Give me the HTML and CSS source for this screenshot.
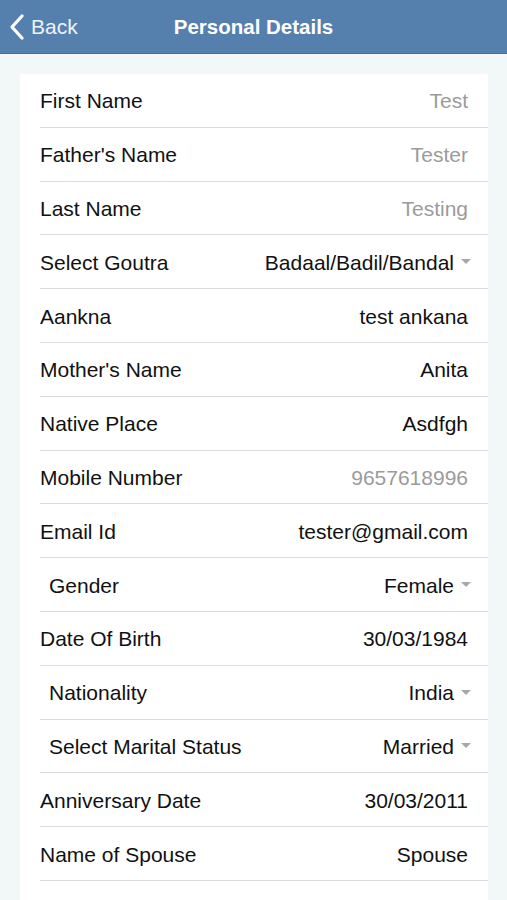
FILE: index.html
```html
<!DOCTYPE html>
<html>
<head>
<meta charset="utf-8">
<link rel="stylesheet" href="styles.css">
</head>
<body>
<header class="navbar">
  <div class="back">
    <svg class="chev" width="16" height="26" viewBox="0 0 16 26"><path d="M13 2 L3 13 L13 24" fill="none" stroke="#fff" stroke-width="3.2" stroke-linecap="round" stroke-linejoin="round"/></svg>
    <span>Back</span>
  </div>
  <div class="title">Personal Details</div>
</header>
<main class="content">
  <div class="card">
    <div class="row"><span class="label">First Name</span><span class="value muted">Test</span></div>
    <div class="row"><span class="label">Father's Name</span><span class="value muted">Tester</span></div>
    <div class="row"><span class="label">Last Name</span><span class="value muted">Testing</span></div>
    <div class="row"><span class="label">Select Goutra</span><span class="value">Badaal/Badil/Bandal<i class="caret"></i></span></div>
    <div class="row"><span class="label">Aankna</span><span class="value">test ankana</span></div>
    <div class="row"><span class="label">Mother's Name</span><span class="value">Anita</span></div>
    <div class="row"><span class="label">Native Place</span><span class="value">Asdfgh</span></div>
    <div class="row"><span class="label">Mobile Number</span><span class="value muted">9657618996</span></div>
    <div class="row"><span class="label">Email Id</span><span class="value">tester@gmail.com</span></div>
    <div class="row"><span class="label indent">Gender</span><span class="value">Female<i class="caret"></i></span></div>
    <div class="row"><span class="label">Date Of Birth</span><span class="value">30/03/1984</span></div>
    <div class="row"><span class="label indent">Nationality</span><span class="value">India<i class="caret"></i></span></div>
    <div class="row"><span class="label indent">Select Marital Status</span><span class="value">Married<i class="caret"></i></span></div>
    <div class="row"><span class="label">Anniversary Date</span><span class="value">30/03/2011</span></div>
    <div class="row"><span class="label">Name of Spouse</span><span class="value">Spouse</span></div>
    <div class="row"><span class="label">Number of Sons</span><span class="value"></span></div>
  </div>
</main>
</body>
</html>
```
FILE: styles.css
```css
html, body {
  margin: 0;
  padding: 0;
}
body {
  background: #f2f8f8;
  font-family: "Liberation Sans", Arial, sans-serif;
  font-size: 21px;
  color: #111;
  width: 507px;
  height: 900px;
  overflow: hidden;
}
.navbar {
  height: 53px;
  background: #5580ad;
  border-bottom: 1px solid #46709c;
  display: flex;
  align-items: center;
  position: relative;
  color: #fff;
}
.back {
  display: flex;
  align-items: center;
  padding-left: 9px;
  gap: 6px;
  color: #eef3f8;
}
.chev {
  display: block;
}
.title {
  position: absolute;
  left: 0;
  right: 0;
  text-align: center;
  font-weight: bold;
  font-size: 20.5px;
  pointer-events: none;
}
.content {
  padding: 20px 19px 0 20px;
}
.card {
  background: #fff;
  padding-left: 20px;
}
.row {
  height: 52.8px;
  box-sizing: content-box;
  border-bottom: 1px solid #dcdcdc;
  display: flex;
  align-items: center;
  justify-content: space-between;
  padding-right: 20px;
}
.label, .value {
  position: relative;
  top: 1px;
}
.label.indent {
  padding-left: 9px;
}
.value {
  display: flex;
  align-items: center;
}
.muted {
  color: #9b9b9b;
}
.caret {
  display: inline-block;
  width: 0;
  height: 0;
  border-left: 5px solid transparent;
  border-right: 5px solid transparent;
  border-top: 5px solid #a8a8a8;
  margin-left: 7px;
  margin-right: -3px;
  margin-top: -2px;
}
```
